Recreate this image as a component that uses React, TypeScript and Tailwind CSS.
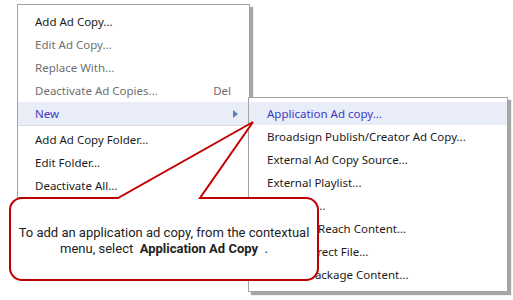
const mainItems = [
  { label: "Add Ad Copy...", state: "normal" },
  { label: "Edit Ad Copy...", state: "disabled" },
  { label: "Replace With...", state: "disabled" },
  { label: "Deactivate Ad Copies...", state: "disabled", shortcut: "Del" },
  { label: "New", state: "active", submenu: true },
  { sep: true },
  { label: "Add Ad Copy Folder...", state: "normal" },
  { label: "Edit Folder...", state: "normal" },
  { label: "Deactivate All...", state: "normal" },
];

const subItems = [
  { label: "Application Ad copy...", active: true },
  { label: "Broadsign Publish/Creator Ad Copy..." },
  { label: "External Ad Copy Source..." },
  { label: "External Playlist..." },
  { label: "Web Link..." },
  { label: "Broadsig Reach Content..." },
  { label: "Linked Direct File..." },
  { label: "HTML5 Package Content..." },
];

function MenuRow({ item }: { item: any }) {
  const color =
    item.state === "active"
      ? "text-[#3a3ac4] bg-[#e9edf8]"
      : item.state === "disabled"
      ? "text-[#6f6f6f]"
      : "text-[#1b1b1b]";
  return (
    <div className={`flex h-[23px] items-center pl-[17px] pr-[11px] ${color}`}>
      <span className="flex-1">{item.label}</span>
      {item.shortcut && <span className="mr-[7px]">{item.shortcut}</span>}
      {item.submenu && (
        <svg width="5" height="8" viewBox="0 0 5 8">
          <path d="M0 0 L5 4 L0 8 Z" fill="#5f7fb8" />
        </svg>
      )}
    </div>
  );
}

export default function App() {
  return (
    <div
      className="relative h-[300px] w-[513px] overflow-hidden bg-white text-[11.5px]"
      style={{ fontFamily: '"Noto Sans", "Open Sans", sans-serif' }}
    >
      {/* main context menu */}
      <div className="absolute left-[17px] top-[4px] w-[233px] border border-[#a3a3a3] bg-white pt-[5px] shadow-[3px_3px_1px_rgba(0,0,0,0.35)]">
        {mainItems.map((item, i) =>
          item.sep ? (
            <div key={i} className="flex h-[3px] items-start">
              <div className="h-px w-full bg-[#dcdcdc]" />
            </div>
          ) : (
            <MenuRow key={i} item={item} />
          )
        )}
      </div>

      {/* submenu */}
      <div className="absolute left-[248px] top-[97px] w-[260px] border border-[#a3a3a3] bg-white pb-[5px] pt-[4px] shadow-[3px_3px_1px_rgba(0,0,0,0.35)]">
        {subItems.map((s) => (
          <div
            key={s.label}
            className={`flex h-[23px] items-center whitespace-pre pl-[18px] ${
              s.active ? "bg-[#e9edf8] text-[#3a3ac4]" : "text-[#1b1b1b]"
            }`}
          >
            {s.label}
          </div>
        ))}
      </div>

      {/* callout */}
      <svg className="absolute left-0 top-0" width="513" height="300" viewBox="0 0 513 300">
        <path
          d="M118 198 L22 198 A12 12 0 0 0 10 210 L10 268 A12 12 0 0 0 22 280 L306 280 A12 12 0 0 0 318 268 L318 210 A12 12 0 0 0 306 198 L200 198 L253 122 Z"
          fill="white"
          stroke="#c00000"
          strokeWidth="2"
        />
      </svg>
      <div
        className="absolute left-[10px] top-[198px] flex h-[82px] w-[308px] flex-col items-center justify-center pt-[4px] text-center text-[13px] leading-[16px] text-[#222]"
        style={{ fontFamily: 'Roboto, "Liberation Sans", sans-serif' }}
      >
        <div>To add an application ad copy, from the contextual</div>
        <div>
          menu, select&nbsp; <span className="font-bold">Application Ad Copy</span>&nbsp; .
        </div>
      </div>
    </div>
  );
}
